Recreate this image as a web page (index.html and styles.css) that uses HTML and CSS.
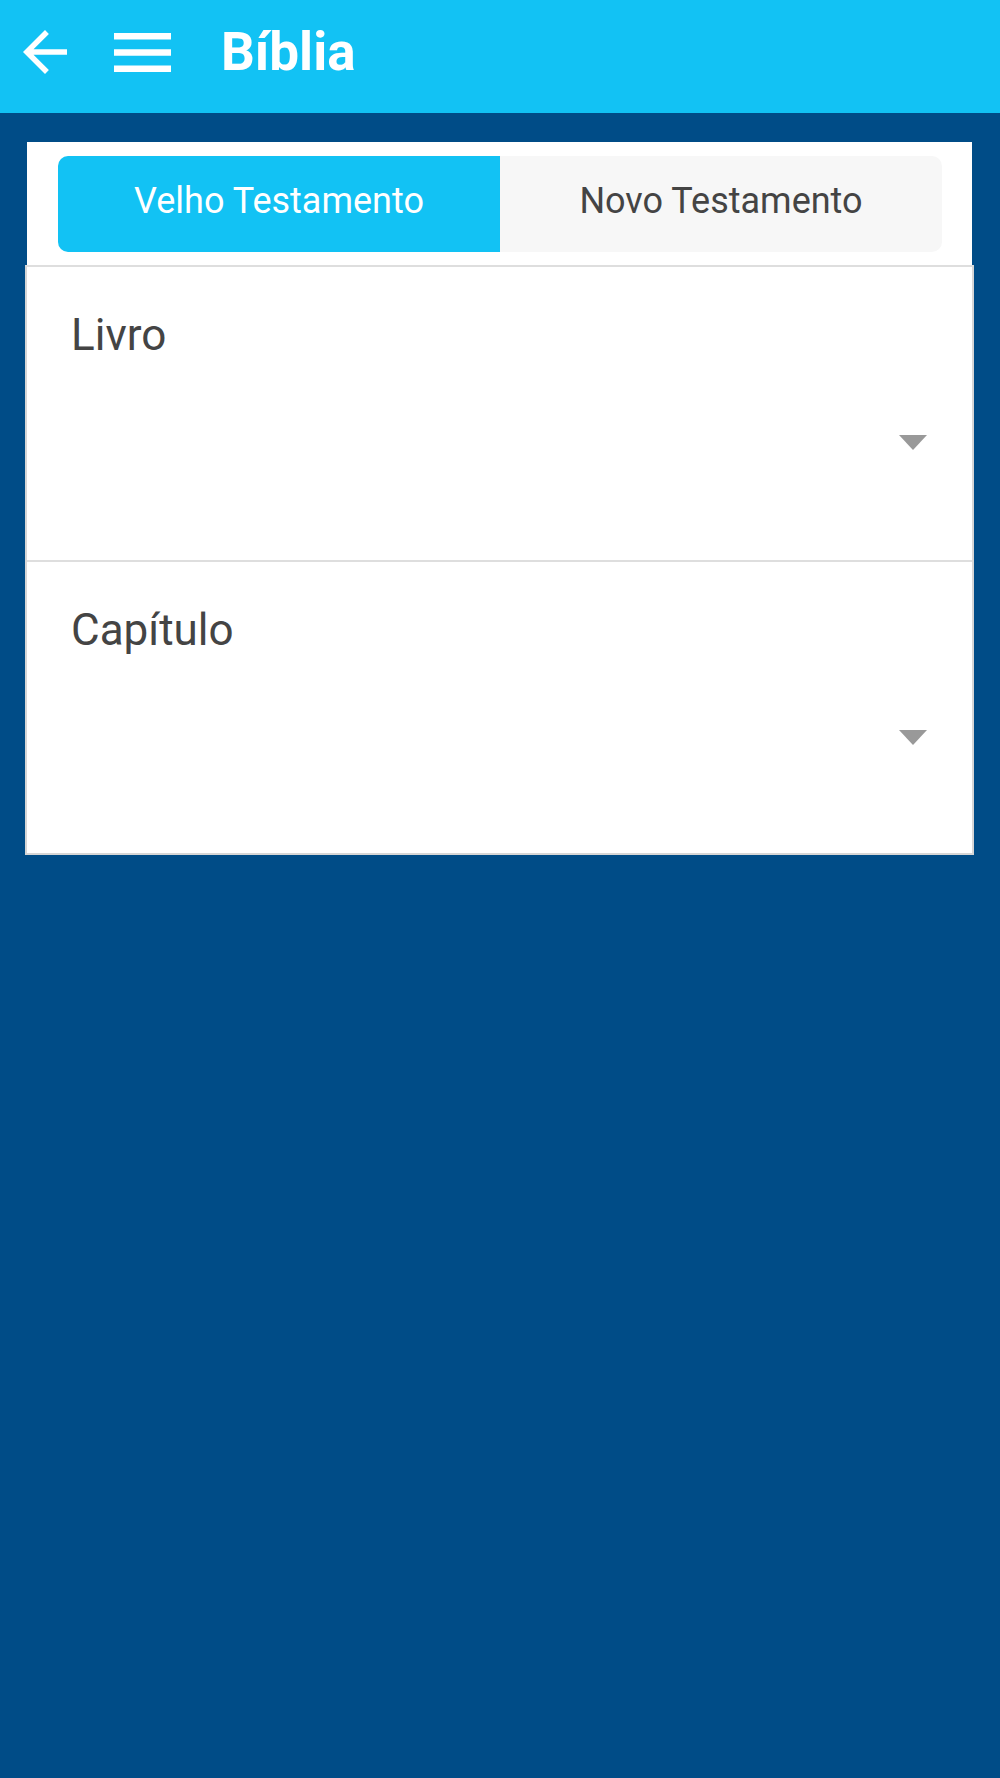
FILE: index.html
```html
<!DOCTYPE html>
<html lang="pt">
<head>
  <meta charset="UTF-8" />
  <meta name="viewport" content="width=device-width, initial-scale=1" />
  <title>Bíblia</title>
  <link rel="stylesheet" href="styles.css">
</head>
<body>

<div class="topbar">
  <svg class="icon-back" viewBox="4 4 16 16" width="44" height="44">
    <path d="M20 11H7.83l5.59-5.59L12 4l-8 8 8 8 1.41-1.41L7.83 13H20v-2z" fill="#fff"/>
  </svg>
  <svg class="icon-menu" viewBox="3 6 18 12" width="57" height="39" preserveAspectRatio="none">
    <path d="M3 18h18v-2H3v2zm0-5h18v-2H3v2zm0-7v2h18V6H3z" fill="#fff"/>
  </svg>
  <div class="title">Bíblia</div>
</div>

<div class="content">
  <!-- Abas -->
  <div class="tabs-card">
    <div class="tabs">
      <div class="tab active">Velho Testamento</div>
      <div class="tab">Novo Testamento</div>
    </div>
  </div>

  <div class="form-card">
    <div class="field">
      <div class="label">Livro</div>
      <div class="select"><span class="caret"></span></div>
    </div>
    <div class="field">
      <div class="label">Capítulo</div>
      <div class="select"><span class="caret"></span></div>
    </div>
  </div>
</div>

</body>
</html>
```

FILE: styles.css
```css
    body {
      margin: 0;
      background-color: #004c87;
      font-family: Roboto, 'Noto Sans', sans-serif;
      min-height: 1778px;
    }
    .topbar {
      height: 113px;
      box-sizing: border-box;
      padding: 0 0 9px 23px;
      background-color: #12c2f4;
      display: flex;
      align-items: center;
    }
    .icon-back {
      display: block;
    }
    .icon-menu {
      display: block;
      margin-left: 47px;
    }
    .title {
      margin-left: 50px;
      color: white;
      font-size: 53px;
      font-weight: bold;
    }
    .content {
      padding: 29px 26px 0 25px;
    }
    .tabs-card {
      margin: 0 2px;
      background-color: white;
      padding: 14px 30px 13px 31px;
    }
    .tabs {
      display: flex;
      height: 96px;
    }
    .tab {
      flex: 1;
      display: flex;
      align-items: center;
      justify-content: center;
      box-sizing: border-box;
      padding-bottom: 6px;
      font-size: 36px;
      color: #444;
      background-color: #f7f7f7;
      border-radius: 0 10px 10px 0;
    }
    .tab.active {
      color: white;
      background-color: #12c2f4;
      border-radius: 10px 0 0 10px;
    }
    .form-card {
      background-color: white;
      border: 2px solid #d6d6d6;
      border-top-color: #dedede;
    }
    .field {
      padding: 44px 45px 88px 44px;
    }
    .field + .field {
      border-top: 2px solid #dedede;
      padding-bottom: 86px;
    }
    .label {
      font-size: 44px;
      color: #444;
      line-height: 49px;
    }
    .select {
      margin-top: 52px;
      height: 60px;
      display: flex;
      align-items: center;
      justify-content: flex-end;
    }
    .caret {
      width: 0;
      height: 0;
      border-left: 14px solid transparent;
      border-right: 14px solid transparent;
      border-top: 15px solid #999;
    }
```
